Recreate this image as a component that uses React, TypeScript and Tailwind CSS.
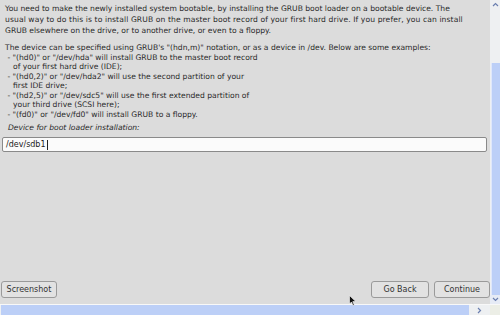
import React from "react";

const Line = ({ children, indent = 0 }: { children: React.ReactNode; indent?: number }) => (
  <div className="whitespace-pre h-[9.5px] leading-[9.5px]" style={{ paddingLeft: indent }}>
    {children}
  </div>
);

export default function App() {
  return (
    <div
      className="w-[500px] h-[315px] flex flex-col bg-[#dcdcdc] overflow-hidden relative"
      style={{ fontFamily: '"DejaVu Sans", sans-serif' }}
    >
      <div className="flex h-[304px]">
        <div className="w-[490px] flex flex-col text-[7.6px] text-[#2a2a2a]">
          <div className="pl-[5px] pt-[3px]">
            <div className="whitespace-pre h-[11px] leading-[11px]">You need to make the newly installed system bootable, by installing the GRUB boot loader on a bootable device. The</div>
            <div className="whitespace-pre h-[11px] leading-[11px] tracking-[0.1px]">usual way to do this is to install GRUB on the master boot record of your first hard drive. If you prefer, you can install</div>
            <div className="whitespace-pre h-[11px] leading-[11px]">GRUB elsewhere on the drive, or to another drive, or even to a floppy.</div>
          </div>
          <div className="pl-[5px] pt-[7px]">
            <Line>The device can be specified using GRUB's "(hdn,m)" notation, or as a device in /dev. Below are some examples:</Line>
            <Line> - "(hd0)" or "/dev/hda" will install GRUB to the master boot record</Line>
            <Line indent={8}>of your first hard drive (IDE);</Line>
            <Line> - "(hd0,2)" or "/dev/hda2" will use the second partition of your</Line>
            <Line indent={8}>first IDE drive;</Line>
            <Line> - "(hd2,5)" or "/dev/sdc5" will use the first extended partition of</Line>
            <Line indent={8}>your third drive (SCSI here);</Line>
            <Line> - "(fd0)" or "/dev/fd0" will install GRUB to a floppy.</Line>
          </div>
          <div className="pl-[8px] pt-[4px] italic h-[10px] leading-[10px]">Device for boot loader installation:</div>
          <div className="pl-[2px] pr-[3px] pt-[8px]">
            <div className="h-[15px] bg-[#fbfbfb] border border-[#8a8a8a] rounded-[2px] flex items-center pl-[3px] text-[8px] text-[#222]">
              <span>/dev/sdb1</span>
              <span className="w-px h-[10px] bg-[#222] ml-px" />
            </div>
          </div>
          <div className="flex-1" />
          <div className="flex items-center pl-[1px] pb-[6px] text-[8px] text-[#333]">
            <button className="h-[17px] w-[56px] bg-[#e2e2e2] border border-[#9a9a9a] rounded-[3px] flex items-center justify-center">Screenshot</button>
            <div className="flex-1" />
            <button className="h-[17px] w-[58px] bg-[#e2e2e2] border border-[#9a9a9a] rounded-[3px] flex items-center justify-center mr-[5px]">Go Back</button>
            <button className="h-[17px] w-[56px] bg-[#e2e2e2] border border-[#9a9a9a] rounded-[3px] flex items-center justify-center">Continue</button>
          </div>
        </div>
        <div className="w-[10px] flex flex-col bg-[#eef0f2]">
          <div className="h-[9px] flex items-center justify-center">
            <svg width="7" height="5" viewBox="0 0 7 5"><path d="M1 4 L3.5 1.5 L6 4" stroke="#6b7fb0" strokeWidth="1.2" fill="none" /></svg>
          </div>
          <div className="h-[54px]" />
          <div className="flex-1 bg-[#bccff7] border-l border-[#dfe7fb] ml-[1px]" />
          <div className="h-[9px] flex items-center justify-center bg-[#e6ebf5]">
            <svg width="7" height="5" viewBox="0 0 7 5"><path d="M1 1 L3.5 3.5 L6 1" stroke="#6b7fb0" strokeWidth="1.2" fill="none" /></svg>
          </div>
        </div>
      </div>
      <div className="flex h-[11px] border-t border-[#f8f8f8]">
        <div className="w-[490px] flex bg-[#eef0f2]">
          <div className="w-[468px] ml-[1px] bg-[#bccff7]" />
          <div className="flex-1 flex items-center justify-center">
            <svg width="5" height="7" viewBox="0 0 5 7"><path d="M1 1 L3.5 3.5 L1 6" stroke="#6b7fb0" strokeWidth="1.2" fill="none" /></svg>
          </div>
        </div>
        <div className="w-[10px] bg-[#eceee6]" />
      </div>
      <svg className="absolute left-[349px] top-[295px]" width="8" height="12" viewBox="0 0 8 12">
        <path d="M0.5 0.5 L0.5 9 L2.5 7 L4 10.5 L5.3 10 L3.8 6.6 L6.8 6.6 Z" fill="#111" stroke="#fff" strokeWidth="0.6" />
      </svg>
    </div>
  );
}
